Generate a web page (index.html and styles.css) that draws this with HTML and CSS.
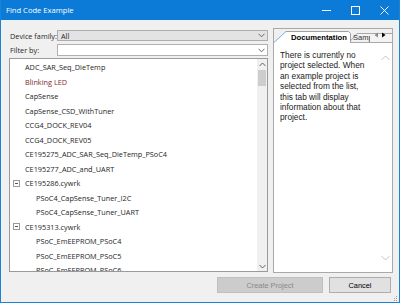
FILE: index.html
```html
<!DOCTYPE html>
<html lang="en">
<head>
    <meta charset="UTF-8">
    <title>Find Code Example</title>
    <link rel="stylesheet" href="styles.css">
</head>
<body>
    <div class="window">
        <div class="titlebar">
            <span class="title">Find Code Example</span>
            <div class="controls">
                <span class="ctl"><svg width="11" height="11" viewBox="0 0 11 11"><path d="M1 5.5h9" stroke="#fff" stroke-width="1"/></svg></span>
                <span class="ctl"><svg width="11" height="11" viewBox="0 0 11 11"><rect x="1.5" y="1.5" width="8" height="8" fill="none" stroke="#fff"/></svg></span>
                <span class="ctl"><svg width="11" height="11" viewBox="0 0 11 11"><path d="M1.5 1.5l8 8M9.5 1.5l-8 8" stroke="#fff"/></svg></span>
            </div>
        </div>
        <div class="body">
            <div class="main">
                <div class="left">
                    <div class="field">
                        <span class="label">Device family:</span>
                        <div class="combo">
                            <span class="value">All</span>
                            <svg class="chev" width="7" height="5" viewBox="0 0 7 5"><path d="M0.5 0.8L3.5 3.8L6.5 0.8" fill="none" stroke="#666"/></svg>
                        </div>
                    </div>
                    <div class="field">
                        <span class="label">Filter by:</span>
                        <div class="combo edit">
                            <span class="value"></span>
                            <svg class="chev" width="7" height="5" viewBox="0 0 7 5"><path d="M0.5 0.8L3.5 3.8L6.5 0.8" fill="none" stroke="#666"/></svg>
                        </div>
                    </div>
                    <div class="list">
                        <div class="items">
                            <div class="item">ADC_SAR_Seq_DieTemp</div>
                            <div class="item red">Blinking LED</div>
                            <div class="item">CapSense</div>
                            <div class="item">CapSense_CSD_WithTuner</div>
                            <div class="item">CCG4_DOCK_REV04</div>
                            <div class="item">CCG4_DOCK_REV05</div>
                            <div class="item">CE195275_ADC_SAR_Seq_DieTemp_PSoC4</div>
                            <div class="item">CE195277_ADC_and_UART</div>
                            <div class="item group"><span class="toggle"></span>CE195286.cywrk</div>
                            <div class="item child">PSoC4_CapSense_Tuner_I2C</div>
                            <div class="item child">PSoC4_CapSense_Tuner_UART</div>
                            <div class="item group"><span class="toggle"></span>CE195313.cywrk</div>
                            <div class="item child">PSoC_EmEEPROM_PSoC4</div>
                            <div class="item child">PSoC_EmEEPROM_PSoC5</div>
                            <div class="item child">PSoC_EmEEPROM_PSoC6</div>
                        </div>
                        <div class="vscroll">
                            <span class="arrow"><svg width="7" height="5" viewBox="0 0 7 5"><path d="M0.5 4L3.5 1L6.5 4" fill="none" stroke="#606060"/></svg></span>
                            <span class="thumb"></span>
                            <span class="track"></span>
                            <span class="arrow"><svg width="7" height="5" viewBox="0 0 7 5"><path d="M0.5 1L3.5 4L6.5 1" fill="none" stroke="#606060"/></svg></span>
                        </div>
                    </div>
                </div>
                <div class="right">
                    <svg class="tabs" width="118" height="14" viewBox="0 0 118 14">
                        <path d="M75 13.5L83 4.5H118" fill="#f3f3f3" stroke="#a9a9a9"/>
                        <path d="M75 13.5H118" stroke="#a9a9a9"/>
                        <path d="M0 13.5L12 2.5H74.5L76.5 4.5V14H0Z" fill="#fff"/>
                        <path d="M0 13.5L12 2.5" fill="none" stroke="#7aaee4"/>
                        <path d="M12 2.5H74.5L76.5 4.5V14" fill="none" stroke="#a0a0a0"/>
                        <text x="17" y="10.5" class="tab-on">Documentation</text>
                        <text x="79" y="11" class="tab-off">Sample</text>
                        <rect x="96" y="5" width="22" height="8" fill="#f3f3f3"/>
                        <path d="M104 3.5V8.5L100.5 6Z" fill="#8a8a8a"/>
                        <path d="M108 3.5V8.5L111.5 6Z" fill="#000"/>
                    </svg>
                    <div class="doc">
                        <p class="doc-text">There is currently no project selected. When an example project is selected from the list, this tab will display information about that project.</p>
                        <div class="doc-scroll">
                            <svg width="9" height="6" viewBox="0 0 9 6"><path d="M0.5 5L4.5 1L8.5 5" fill="none" stroke="#c4c4c4"/></svg>
                            <svg width="9" height="6" viewBox="0 0 9 6"><path d="M0.5 1L4.5 5L8.5 1" fill="none" stroke="#c4c4c4"/></svg>
                        </div>
                    </div>
                </div>
            </div>
            <div class="footer">
                <button class="btn create" disabled>Create Project</button>
                <button class="btn">Cancel</button>
            </div>
            <svg class="grip" width="5" height="5" viewBox="0 0 5 5"><rect x="3" y="0" width="1" height="1" fill="#a0a0a0"/><rect x="1" y="2" width="1" height="1" fill="#a0a0a0"/><rect x="3" y="2" width="1" height="1" fill="#a0a0a0"/><rect x="1" y="4" width="1" height="1" fill="#a0a0a0"/><rect x="3" y="4" width="1" height="1" fill="#a0a0a0"/></svg>
        </div>
    </div>
</body>
</html>
```

FILE: styles.css
```css
*{
    margin: 0;
    padding: 0;
    box-sizing: border-box;
}
body{
    width: 400px;
    height: 303px;
    overflow: hidden;
    font-family: "Open Sans", "Noto Sans", sans-serif;
    font-size: 7.3px;
    color: #1e1e1e;
}
.window{
    width: 400px;
    height: 303px;
    border: 1px solid #1883d7;
    border-top: none;
    background-color: #f0f0f0;
    display: flex;
    flex-direction: column;
}
.titlebar{
    height: 20px;
    background-color: #0c7bd8;
    display: flex;
    align-items: center;
    justify-content: space-between;
    color: #fff;
}
.title{
    padding-left: 5px;
    font-size: 7.6px;
}
.controls{
    display: flex;
    height: 100%;
}
.ctl{
    width: 29px;
    height: 100%;
    display: flex;
    align-items: center;
    justify-content: center;
}
.body{
    flex: 1;
    position: relative;
    padding: 8px 6px 0 8px;
    display: flex;
    flex-direction: column;
}
.main{
    display: flex;
    gap: 5px;
    height: 245px;
}
.left{
    width: 259px;
    padding: 2px 0 1px 0;
    display: flex;
    flex-direction: column;
}
.field{
    display: flex;
    align-items: center;
}
.field + .field{
    margin-top: 3px;
}
.label{
    width: 48px;
    padding-left: 1px;
}
.combo{
    flex: 1;
    height: 11px;
    border: 1px solid #adadad;
    background-color: #e3e3e3;
    display: flex;
    align-items: center;
    justify-content: space-between;
    padding: 0 2px 0 3px;
}
.combo.edit{
    height: 12px;
    background-color: #fff;
    border-color: #b0b0b0;
}
.value{
    font-size: 7.3px;
}
.chev{
    display: block;
}
.list{
    flex: 1;
    margin-top: 2px;
    border: 1px solid #9a9a9a;
    background-color: #fff;
    display: flex;
    overflow: hidden;
}
.items{
    flex: 1;
    padding-top: 1px;
    overflow: hidden;
}
.item{
    height: 14.5px;
    line-height: 14.5px;
    padding-left: 15px;
    white-space: nowrap;
}
.item.red{
    color: #7a2c2c;
}
.item.group{
    padding-left: 3px;
    display: flex;
    align-items: center;
}
.item.child{
    padding-left: 26px;
}
.toggle{
    width: 7px;
    height: 7px;
    border: 1px solid #9a9a9a;
    margin-right: 5px;
    position: relative;
}
.toggle::after{
    content: "";
    position: absolute;
    left: 1px;
    top: 2px;
    width: 3px;
    height: 1px;
    background-color: #555;
}
.vscroll{
    width: 10px;
    background-color: #f0f0f0;
    display: flex;
    flex-direction: column;
    align-items: center;
}
.arrow{
    height: 10px;
    display: flex;
    align-items: center;
    justify-content: center;
}
.thumb{
    width: 8px;
    height: 16px;
    margin-top: 1px;
    background-color: #cdcdcd;
}
.track{
    flex: 1;
}
.right{
    width: 120px;
    border: 1px solid #a9a9a9;
    display: flex;
    flex-direction: column;
}
.tabs{
    display: block;
    flex: none;
}
.tab-on{
    font-family: "Liberation Sans", Arial, sans-serif;
    font-weight: bold;
    font-size: 7.7px;
    fill: #000;
}
.tab-off{
    font-family: "Liberation Sans", Arial, sans-serif;
    font-size: 7.5px;
    fill: #333;
}
.doc{
    flex: 1;
    background-color: #fff;
    display: flex;
    justify-content: space-between;
    padding: 7px 1px 7px 6px;
}
.doc-text{
    width: 91px;
    font-family: "Liberation Sans", Arial, sans-serif;
    font-size: 8.3px;
    line-height: 10.4px;
    color: #1a1a1a;
}
.doc-scroll{
    width: 11px;
    display: flex;
    flex-direction: column;
    justify-content: space-between;
    align-items: center;
    padding: 5px 0 4px 0;
}
.doc-scroll svg{
    display: block;
}
.footer{
    display: flex;
    justify-content: flex-end;
    gap: 6px;
    margin-top: 4px;
    padding-right: 2px;
}
.btn{
    height: 16px;
    border: 1px solid #adadad;
    background-color: #e1e1e1;
    font-family: "Liberation Sans", Arial, sans-serif;
    font-size: 7.4px;
    color: #000;
}
.btn.create{
    width: 106px;
    background-color: #cccccc;
    border-color: #bfbfbf;
    color: #8a8a8a;
}
.btn:last-child{
    width: 62px;
}
.grip{
    position: absolute;
    right: 1px;
    bottom: 1px;
}
```
